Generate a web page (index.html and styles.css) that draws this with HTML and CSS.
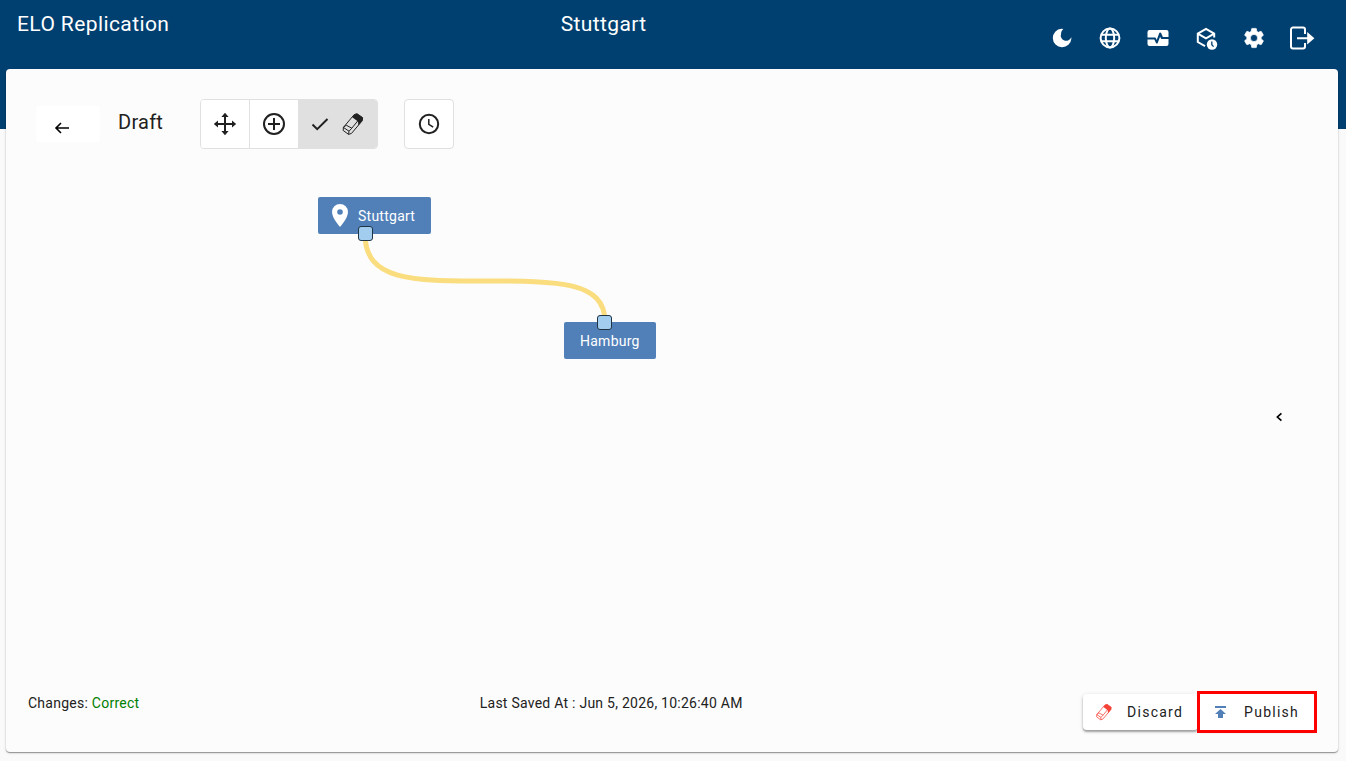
FILE: index.html
```html
<!DOCTYPE html>
<html lang="en">
<head>
<meta charset="utf-8">
<meta name="viewport" content="width=device-width, initial-scale=1">
<title>ELO Replication</title>
<link rel="stylesheet" href="styles.css">
</head>
<body class="page">
<svg class="defs" aria-hidden="true">
  <symbol id="eraser" viewBox="0 0 24 24">
    <path d="M13.2 2.6 16 1.7 21.6 5.6 21.3 8.7 10.5 21.4 7.6 22.4 2.2 18.5 2.4 15.4Z" fill="none" stroke="currentColor" stroke-width="1"/>
    <path d="M2.4 15.4 8 19.2 7.6 22.4M8 19.2 10.8 16.2 17 8.6M2.4 15.4 5.2 13.2 10.8 16.2" fill="none" stroke="currentColor" stroke-width="1"/>
    <path d="M13.2 2.6 16 1.7 21.6 5.6 21.3 8.7 17.3 13.6 17 9.6 11.2 5.2Z" fill="currentColor"/>
  </symbol>
</svg>
<header class="header">
  <h1 class="title">ELO Replication</h1>
  <h2 class="title">Stuttgart</h2>
  <nav class="actions">
    <button class="action" aria-label="Dark mode"><svg viewBox="0 0 24 24" width="24" height="24"><path d="M11.5 2.7a9.3 9.3 0 1 0 9.9 9.9c0-.46-.04-.92-.1-1.36A5.4 5.4 0 0 1 11.1 7.5c0-1.81.89-3.42 2.26-4.5A9.1 9.1 0 0 0 11.5 2.7Z"/></svg></button>
    <button class="action" aria-label="Language"><svg class="line" viewBox="0 0 24 24" width="24" height="24"><circle cx="12" cy="12" r="9.4"/><ellipse cx="12" cy="12" rx="4.2" ry="9.4"/><path d="M3.5 8.8h17M3.5 15.2h17"/></svg></button>
    <button class="action" aria-label="Monitoring"><svg viewBox="0 0 24 24" width="24" height="24"><path d="M15.1 7.1a1 1 0 0 0-1.9.2L10.7 14l-.8-2a1 1 0 0 0-.9-.5H1.5V6a2 2 0 0 1 2-2h17a2 2 0 0 1 2 2v5.1h-5.6zM10 16.9a1 1 0 0 0 1.7 0l2.4-6.2.9 1.8a1 1 0 0 0 .9.5h6.6v5a2 2 0 0 1-2 2h-17a2 2 0 0 1-2-2v-4.6h6.8z"/></svg></button>
    <button class="action" aria-label="Scheduled packages"><svg viewBox="0 0 24 24" width="24" height="24"><path d="M11 20.2 3.8 16V7.6L12 2.8l8.2 4.8v4M3.8 7.6 12 12.3l8.2-4.7" fill="none" stroke="currentColor" stroke-width="2"/><circle cx="18" cy="18.5" r="5.2"/><path class="cut" d="M17.8 15.5v3.3l1.8 1.8"/></svg></button>
    <button class="action" aria-label="Settings"><svg viewBox="0 0 24 24" width="24" height="24"><path d="M19.14 12.94c.04-.3.06-.61.06-.94s-.02-.64-.07-.94l2.03-1.58a.49.49 0 0 0 .12-.61l-1.92-3.32a.49.49 0 0 0-.59-.22l-2.39.96a7 7 0 0 0-1.62-.94l-.36-2.54a.48.48 0 0 0-.48-.41h-3.84a.48.48 0 0 0-.47.41l-.36 2.54c-.59.24-1.13.57-1.62.94l-2.39-.96a.48.48 0 0 0-.59.22L2.74 8.87a.48.48 0 0 0 .12.61l2.03 1.58a6 6 0 0 0 0 1.88l-2.03 1.58a.49.49 0 0 0-.12.61l1.92 3.32c.12.22.37.29.59.22l2.39-.96c.5.38 1.03.7 1.62.94l.36 2.54c.05.24.24.41.48.41h3.84c.24 0 .44-.17.47-.41l.36-2.54a7 7 0 0 0 1.62-.94l2.39.96c.22.08.47 0 .59-.22l1.92-3.32a.48.48 0 0 0-.12-.61zM12 15.6a3.6 3.6 0 1 1 0-7.2 3.6 3.6 0 0 1 0 7.2Z" stroke="currentColor" stroke-width=".7"/></svg></button>
    <button class="action" aria-label="Log out"><svg viewBox="0 0 24 24" width="24" height="24"><path d="M15 8V3.5a2 2 0 0 0-2-2H3a2 2 0 0 0-2 2v17a2 2 0 0 0 2 2h10a2 2 0 0 0 2-2V17M7 12.2h12" fill="none" stroke="currentColor" stroke-width="2"/><path d="m17.2 6 7.2 6.2-7.2 6.2Z"/></svg></button>
  </nav>
</header>
<main class="card">
  <div class="toolbar">
    <button class="back" aria-label="Back"><svg viewBox="0 0 14 12" width="14" height="12"><path d="M14 6H1M6 1 1 6l5 5" fill="none" stroke="currentColor" stroke-width="1.6"/></svg></button>
    <h3 class="heading">Draft</h3>
    <div class="group">
      <button class="tool" aria-label="Move"><svg viewBox="0 0 24 24" width="24" height="24"><path d="M12 3v18M3 12h18" stroke="currentColor" stroke-width="2"/><path d="M12 .8 15.6 5H8.4ZM12 23.2 8.4 19h7.2ZM.8 12 5 8.4v7.2ZM23.2 12 19 15.6V8.4Z"/></svg></button>
      <button class="tool" aria-label="Add"><svg class="line" viewBox="0 0 24 24" width="24" height="24"><circle cx="12" cy="12" r="10"/><path d="M12 6v12M6 12h12"/></svg></button>
      <button class="tool tool-active" aria-label="Erase" aria-pressed="true"><svg viewBox="0 0 18 14" width="18" height="14"><path d="m1.5 7.5 4.7 4.7L16.5 2" fill="none" stroke="currentColor" stroke-width="2"/></svg><svg width="24" height="24"><use href="#eraser"/></svg></button>
    </div>
    <button class="tool tool-single" aria-label="Schedule"><svg class="line" viewBox="0 0 24 24" width="24" height="24"><circle cx="12" cy="12" r="9.2"/><path d="M11.8 7v5.4l4.4 2.8" stroke-width="1.5"/></svg></button>
  </div>
  <section class="canvas" aria-label="Replication graph">
    <svg class="edge" width="260" height="110" viewBox="350 225 260 110"><path d="M365 234C365 281 412 281 485 281S605 281 605 322" fill="none" stroke="#fadd7f" stroke-width="5"/></svg>
    <div class="node node-source"><svg viewBox="0 0 16 23" width="16" height="23"><path fill-rule="evenodd" d="M8 0a8 8 0 0 0-8 8c0 6 8 15 8 15s8-9 8-15a8 8 0 0 0-8-8m0 5.2a2.8 2.8 0 1 1 0 5.6 2.8 2.8 0 0 1 0-5.6Z"/></svg>Stuttgart<span class="port port-bottom"></span></div>
    <div class="node node-target">Hamburg<span class="port port-top"></span></div>
    <button class="expand" aria-label="Open side panel"><svg viewBox="0 0 6 8" width="6" height="8"><path d="M5.4.3 1.4 4l4 3.7" fill="none" stroke="currentColor" stroke-width="1.7"/></svg></button>
  </section>
  <footer class="status">
    <p class="note">Changes: <span class="ok">Correct</span></p>
    <p class="note">Last Saved At : Jun 5, 2026, 10:26:40 AM</p>
    <div class="commands">
      <button class="command"><svg class="red" width="18" height="18"><use href="#eraser"/></svg>Discard</button>
      <button class="command command-marked"><svg class="blue" viewBox="0 0 18 18" width="18" height="18"><path d="M3 3h11v2H3ZM8.5 6l5.5 5h-3v4H6v-4H3Z"/></svg>Publish</button>
    </div>
  </footer>
</main>
</body>
</html>
```
FILE: styles.css
```css
* { box-sizing: border-box; }
.page {
  margin: 0;
  min-height: 100vh;
  display: flex;
  flex-direction: column;
  background: #fafafa;
  color: #212121;
  font-family: Roboto, "Liberation Sans", sans-serif;
  font-size: 14px;
  line-height: 20px;
  letter-spacing: 0.25px;
}
button {
  margin: 0;
  padding: 0;
  border: 0;
  background: none;
  color: inherit;
  font: inherit;
  cursor: pointer;
}
svg { flex: none; display: block; fill: currentColor; overflow: visible; }
.line { fill: none; stroke: currentColor; stroke-width: 2; }
.defs { position: absolute; width: 0; height: 0; }
.header {
  display: flex;
  justify-content: space-between;
  align-items: flex-start;
  height: 129px;
  padding: 8px 20px 0 17px;
  background: #004071;
  color: #fff;
}
.title, .heading { margin: 0; font-size: 20px; font-weight: 400; line-height: 32px; }
.title { font-size: 21px; letter-spacing: 0.4px; }
.actions { display: flex; padding-top: 6px; }
.action {
  display: flex;
  justify-content: center;
  align-items: center;
  width: 48px;
  height: 48px;
}
.cut { fill: none; stroke: #004071; stroke-width: 1.3; }
.card {
  flex: 1;
  display: flex;
  flex-direction: column;
  margin: -60px 8px 9px 6px;
  border-radius: 4px;
  background: #fcfcfc;
  box-shadow: 0 1px 1px rgba(0,0,0,.35), 0 1px 3px rgba(0,0,0,.15);
}
.toolbar { display: flex; align-items: center; padding: 30px 30px 0; }
.back {
  display: flex;
  align-items: center;
  width: 64px;
  height: 36px;
  padding: 7px 0 0 19px;
  border-radius: 4px;
  background: #fff;
  color: #000;
}
.heading { margin: 0 37px 4px 18px; }
.group {
  display: flex;
  height: 50px;
  margin-right: 26px;
  border: 1px solid #e0e0e0;
  border-radius: 4px;
  overflow: hidden;
}
.tool {
  display: flex;
  align-items: center;
  justify-content: center;
  width: 48px;
  background: #fff;
}
.tool + .tool { width: 49px; border-left: 1px solid #e0e0e0; }
.group .tool-active { width: 79px; gap: 12px; background: #e0e0e0; }
.tool-single { width: 50px; height: 50px; border: 1px solid #e0e0e0; border-radius: 4px; }
.canvas {
  position: relative;
  flex: 1;
  min-height: 240px;
  display: flex;
  align-items: center;
  justify-content: flex-end;
  padding-right: 41px;
}
.edge { position: absolute; left: 344px; top: 76px; }
.node {
  position: absolute;
  display: flex;
  align-items: center;
  gap: 10px;
  height: 37px;
  border-radius: 2px;
  background: #5180b9;
  color: #fff;
}
.node-source { left: 312px; top: 48px; padding: 0 16px 0 14px; }
.node-target { left: 558px; top: 173px; padding: 0 16px; }
.port {
  position: absolute;
  width: 15px;
  height: 15px;
  border: 1px solid #1f3445;
  border-radius: 3px;
  background: #a3cdee;
}
.port-bottom { left: 40px; bottom: -7px; }
.port-top { left: 33px; top: -7px; }
.expand {
  display: flex;
  align-items: center;
  justify-content: center;
  width: 36px;
  height: 36px;
  color: #000;
}
.status {
  display: flex;
  justify-content: space-between;
  align-items: flex-start;
  height: 67px;
  padding: 8px 24px 0 22px;
}
.note { margin: 0; }
.ok { color: #008000; }
.commands { display: flex; gap: 2px; padding-top: 1px; }
.command {
  display: flex;
  align-items: center;
  gap: 14px;
  height: 36px;
  padding: 0 15px 1px 12px;
  border-radius: 4px;
  background: #fff;
  box-shadow: 0 2px 2px rgba(0,0,0,.3), 0 1px 4px rgba(0,0,0,.15);
  letter-spacing: 1.25px;
}
.command-marked { outline: 3px solid #f00; border-radius: 0; }
.red { color: #f44336; }
.blue { color: #5180b9; }
```
